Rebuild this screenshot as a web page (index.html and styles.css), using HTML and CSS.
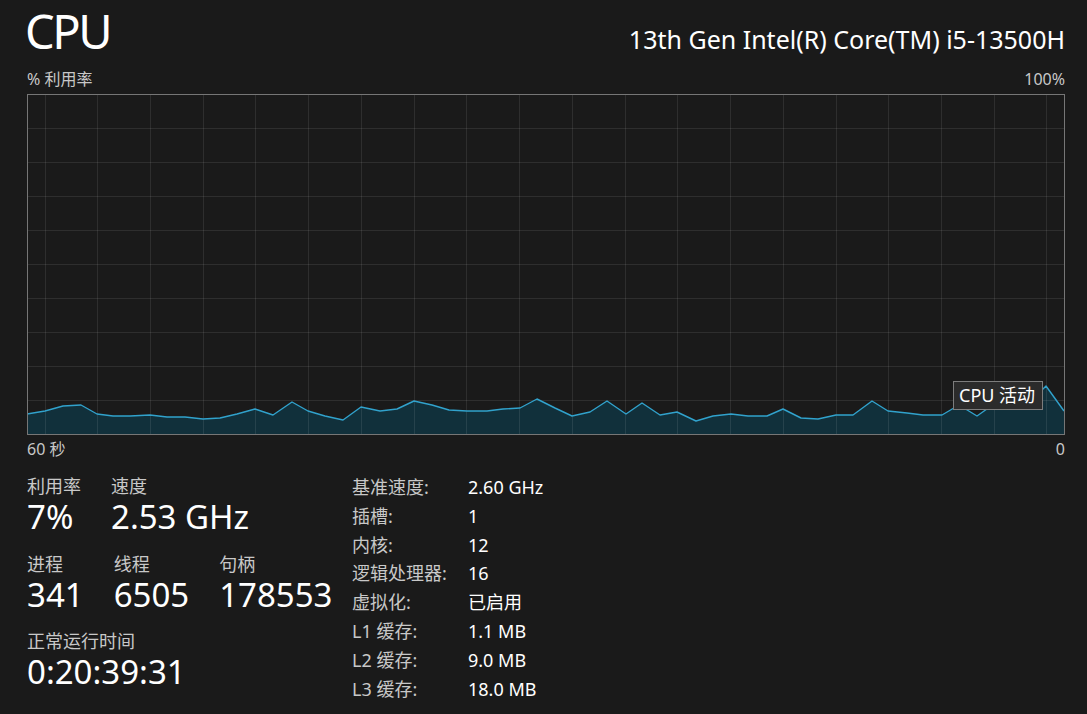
FILE: index.html
```html
<!DOCTYPE html>
<html lang="zh-CN">
<head>
<meta charset="utf-8">
<title>CPU</title>
<link rel="stylesheet" href="styles.css">
</head>
<body>
<div class="page">
  <header class="head">
    <h1 class="title">CPU</h1>
    <div class="model">13th Gen Intel(R) Core(TM) i5-13500H</div>
  </header>
  <div class="axis axis-top"><span>% 利用率</span><span>100%</span></div>
  <div class="chart">
    <svg class="graph" width="1038" height="341" viewBox="0 0 1038 341">
      <polygon class="area" points="0,340 0,320 18,317 36,312 54,311 70,320 86,322 103,322 123,321 140,323 158,323 176,325 193,324 210,320 228,315 246,321 265,308 281,317 298,322 316,326 334,313 353,317 370,315 387,307 405,311 422,316 440,317 460,317 476,315 493,314 510,305 528,314 545,322 563,318 580,307 599,320 615,309 633,321 650,318 669,327 686,322 704,320 721,322 740,322 756,315 774,324 791,325 809,321 826,321 845,307 861,317 880,319 896,321 915,321 932,311 950,322 967,310 985,310 1002,309 1019,292 1037,317 1037,340"/>
      <g class="grid">
        <line x1="18.5" y1="1" x2="18.5" y2="340"/><line x1="70.5" y1="1" x2="70.5" y2="340"/>
        <line x1="123.5" y1="1" x2="123.5" y2="340"/><line x1="176.5" y1="1" x2="176.5" y2="340"/>
        <line x1="228.5" y1="1" x2="228.5" y2="340"/><line x1="281.5" y1="1" x2="281.5" y2="340"/>
        <line x1="334.5" y1="1" x2="334.5" y2="340"/><line x1="387.5" y1="1" x2="387.5" y2="340"/>
        <line x1="439.5" y1="1" x2="439.5" y2="340"/><line x1="492.5" y1="1" x2="492.5" y2="340"/>
        <line x1="545.5" y1="1" x2="545.5" y2="340"/><line x1="598.5" y1="1" x2="598.5" y2="340"/>
        <line x1="650.5" y1="1" x2="650.5" y2="340"/><line x1="703.5" y1="1" x2="703.5" y2="340"/>
        <line x1="756.5" y1="1" x2="756.5" y2="340"/><line x1="809.5" y1="1" x2="809.5" y2="340"/>
        <line x1="861.5" y1="1" x2="861.5" y2="340"/><line x1="914.5" y1="1" x2="914.5" y2="340"/>
        <line x1="967.5" y1="1" x2="967.5" y2="340"/><line x1="1019.5" y1="1" x2="1019.5" y2="340"/>
        <line x1="1" y1="34.5" x2="1037" y2="34.5"/><line x1="1" y1="68.5" x2="1037" y2="68.5"/>
        <line x1="1" y1="102.5" x2="1037" y2="102.5"/><line x1="1" y1="136.5" x2="1037" y2="136.5"/>
        <line x1="1" y1="170.5" x2="1037" y2="170.5"/><line x1="1" y1="204.5" x2="1037" y2="204.5"/>
        <line x1="1" y1="238.5" x2="1037" y2="238.5"/><line x1="1" y1="272.5" x2="1037" y2="272.5"/>
        <line x1="1" y1="306.5" x2="1037" y2="306.5"/>
      </g>
      <polyline class="line" points="0,320 18,317 36,312 54,311 70,320 86,322 103,322 123,321 140,323 158,323 176,325 193,324 210,320 228,315 246,321 265,308 281,317 298,322 316,326 334,313 353,317 370,315 387,307 405,311 422,316 440,317 460,317 476,315 493,314 510,305 528,314 545,322 563,318 580,307 599,320 615,309 633,321 650,318 669,327 686,322 704,320 721,322 740,322 756,315 774,324 791,325 809,321 826,321 845,307 861,317 880,319 896,321 915,321 932,311 950,322 967,310 985,310 1002,309 1019,292 1037,317"/>
      <rect class="frame" x="0.5" y="0.5" width="1037" height="340"/>
    </svg>
    <div class="tip">CPU 活动</div>
  </div>
  <div class="axis axis-bottom"><span>60 秒</span><span>0</span></div>

  <section class="stats">
    <div class="left">
      <div class="row row1">
        <div class="stat"><div class="lbl">利用率</div><div class="val">7%</div></div>
        <div class="stat"><div class="lbl">速度</div><div class="val">2.53 GHz</div></div>
      </div>
      <div class="row row2">
        <div class="stat"><div class="lbl">进程</div><div class="val">341</div></div>
        <div class="stat"><div class="lbl">线程</div><div class="val">6505</div></div>
        <div class="stat"><div class="lbl">句柄</div><div class="val">178553</div></div>
      </div>
      <div class="row row3">
        <div class="stat"><div class="lbl">正常运行时间</div><div class="val">0:20:39:31</div></div>
      </div>
    </div>
    <dl class="right">
      <dt>基准速度:</dt><dd>2.60 GHz</dd>
      <dt>插槽:</dt><dd>1</dd>
      <dt>内核:</dt><dd>12</dd>
      <dt>逻辑处理器:</dt><dd>16</dd>
      <dt>虚拟化:</dt><dd>已启用</dd>
      <dt>L1 缓存:</dt><dd>1.1 MB</dd>
      <dt>L2 缓存:</dt><dd>9.0 MB</dd>
      <dt>L3 缓存:</dt><dd>18.0 MB</dd>
    </dl>
  </section>
</div>
</body>
</html>
```
FILE: styles.css
```css
html, body {
  margin: 0;
  padding: 0;
  background: #1a1a1a;
}
body {
  font-family: "Noto Sans", "Noto Sans CJK SC", sans-serif;
  color: #ffffff;
  width: 1087px;
  height: 714px;
  overflow: hidden;
}
.page {
  padding: 0 22px 0 27px;
}
.head {
  display: flex;
  justify-content: space-between;
  align-items: baseline;
  padding-top: 3px;
  height: 56px;
}
.title {
  margin: 0 0 0 -2px;
  font-weight: 400;
  font-size: 47px;
  letter-spacing: -2.5px;
  line-height: 56px;
}
.model {
  font-size: 25px;
  line-height: 30px;
}
.axis {
  display: flex;
  justify-content: space-between;
  font-size: 16px;
  line-height: 20px;
  color: #c8c8c8;
}
.axis-top {
  padding-top: 10px;
  padding-bottom: 5px;
}
.axis-bottom {
  padding-top: 4px;
}
.chart {
  position: relative;
  width: 1038px;
  height: 341px;
}
.graph {
  display: block;
}
.area {
  fill: #11303b;
}
.grid line {
  stroke: rgba(255, 255, 255, 0.09);
  stroke-width: 1;
}
.line {
  fill: none;
  stroke: #31a2cc;
  stroke-width: 1.4;
  stroke-linejoin: round;
}
.frame {
  fill: none;
  stroke: #767676;
  stroke-width: 1;
}
.tip {
  position: absolute;
  left: 926px;
  top: 287px;
  box-sizing: border-box;
  width: 90px;
  height: 29px;
  background: #2b2b2b;
  border: 1px solid #7d7d7d;
  color: #ffffff;
  font-size: 18px;
  line-height: 26px;
  padding-left: 5px;
  white-space: nowrap;
}
.stats {
  display: flex;
  align-items: flex-start;
}
.left {
  flex: none;
  width: 325px;
  padding-top: 15px;
}
.row {
  display: flex;
  gap: 30px;
}
.row2 {
  margin-top: 16px;
}
.row3 {
  margin-top: 15px;
}
.stat .lbl {
  font-size: 18px;
  line-height: 24px;
  color: #c8c8c8;
}
.stat .val {
  font-size: 33px;
  line-height: 38px;
}
.row1 .stat:first-child {
  width: 54px;
}
.right {
  margin: 0;
  padding-top: 14px;
  display: grid;
  grid-template-columns: 116px auto;
  font-size: 18px;
  line-height: 28.8px;
}
.right dt {
  color: #c8c8c8;
}
.right dd {
  margin: 0;
  color: #ffffff;
}
```
